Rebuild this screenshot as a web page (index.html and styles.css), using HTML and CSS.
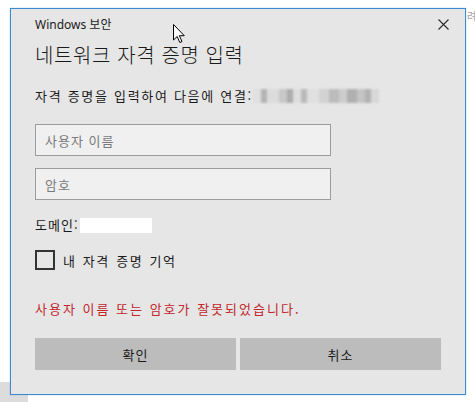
FILE: index.html
```html
<!DOCTYPE html>
<html lang="ko">
<head>
<meta charset="utf-8">
<link rel="stylesheet" href="styles.css">
</head>
<body>
<div class="page">
  <div class="under-tab"></div>
  <div class="peek">려워</div>
  <div class="dialog">
    <div class="caption-row">
      <span class="caption">Windows 보안</span>
      <svg class="close" width="11" height="11" viewBox="0 0 11 11"><path d="M0.5 0.5 L10.5 10.5 M10.5 0.5 L0.5 10.5" stroke="#2b2b2b" stroke-width="1.1" fill="none"/></svg>
    </div>
    <div class="title">네트워크 자격 증명 입력</div>
    <div class="subtitle">자격 증명을 입력하여 다음에 연결: <span class="blurred"></span></div>
    <div class="field field-first"><span class="placeholder">사용자 이름</span></div>
    <div class="field"><span class="placeholder">암호</span></div>
    <div class="domain">도메인:<span class="domain-box"></span></div>
    <label class="remember"><span class="checkbox"></span><span class="remember-text">내 자격 증명 기억</span></label>
    <div class="error">사용자 이름 또는 암호가 잘못되었습니다.</div>
    <div class="buttons">
      <div class="btn">확인</div>
      <div class="btn">취소</div>
    </div>
  </div>
  <svg class="cursor" width="13" height="20" viewBox="0 0 13 20"><path d="M0.5 0.5 L0.5 16 L4.2 12.5 L6.8 18.5 L9 17.6 L6.4 11.7 L11.3 11.7 Z" fill="#ffffff" stroke="#000000" stroke-width="1" stroke-linejoin="miter"/></svg>
</div>
</body>
</html>
```
FILE: styles.css
```css
html, body {
  margin: 0;
  padding: 0;
  background: #ffffff;
}
.page {
  position: relative;
  width: 475px;
  height: 402px;
  overflow: hidden;
  font-family: "Noto Sans", "Noto Sans CJK KR", sans-serif;
  color: #1a1a1a;
}
.under-tab {
  position: absolute;
  left: 0;
  top: 382px;
  width: 28px;
  height: 20px;
  background: #dcdcdc;
}
.peek {
  position: absolute;
  left: 467px;
  top: 10px;
  font-size: 10px;
  line-height: 12px;
  white-space: nowrap;
  color: #a0a0a0;
  font-family: "Noto Sans CJK KR", sans-serif;
}
.cursor {
  position: absolute;
  left: 173px;
  top: 24px;
}
.dialog {
  position: relative;
  margin: 8px 0 0 10px;
  width: 456px;
  height: 387px;
  box-sizing: border-box;
  border: 1px solid #3d8ad0;
  background: #e6e6e6;
  padding: 0 24px;
  box-shadow: 0 0 1px rgba(60, 138, 208, 0.6);
}
.caption-row {
  display: flex;
  justify-content: space-between;
  align-items: center;
  margin-top: 8px;
  height: 16px;
}
.caption {
  font-size: 12px;
  line-height: 16px;
  color: #1a1a1a;
}
.caption-row .close {
  margin-right: -8px;
  margin-top: -1px;
}
.title {
  margin-top: 8px;
  font-family: "Noto Sans CJK KR", sans-serif;
  font-size: 20px;
  font-weight: 300;
  line-height: 28px;
  color: #1a1a1a;
  letter-spacing: 0.6px;
}
.subtitle {
  margin-top: 17px;
  font-family: "Noto Sans CJK KR", sans-serif;
  font-size: 13px;
  line-height: 20px;
  letter-spacing: 1.7px;
  display: flex;
  align-items: center;
}
.blurred {
  display: inline-block;
  width: 126px;
  height: 14px;
  margin-left: 0;
  background:
    linear-gradient(90deg,
      #e0e0e0 0 8px, #b4b4b4 8px 14px, #dcdcdc 14px 26px, #c8c8c8 26px 34px,
      #acacac 34px 40px, #dddddd 40px 48px, #bababa 48px 54px, #e0e0e0 54px 66px,
      #d2d2d2 66px 76px, #bcbcbc 76px 86px, #cccccc 86px 94px, #b0b0b0 94px 104px,
      #c4c4c4 104px 112px, #b2b2b2 112px 118px, #d8d8d8 118px 126px);
  filter: blur(0.8px);
}
.field {
  margin-top: 12px;
  width: 296px;
  height: 32px;
  box-sizing: border-box;
  border: 1px solid #9c9c9c;
  background: #f0f0f0;
  display: flex;
  align-items: center;
  padding-left: 9px;
}
.field-first {
  margin-top: 18px;
}
.placeholder {
  font-family: "Noto Sans CJK KR", sans-serif;
  font-size: 13px;
  letter-spacing: 1px;
  color: #7a7a7a;
}
.domain {
  margin-top: 15px;
  font-family: "Noto Sans CJK KR", sans-serif;
  font-size: 13px;
  line-height: 20px;
  letter-spacing: 1px;
  display: flex;
  align-items: center;
}
.domain-box {
  display: inline-block;
  width: 72px;
  height: 15px;
  background: #ffffff;
  margin-left: 1px;
}
.remember {
  margin-top: 15px;
  display: flex;
  align-items: center;
  height: 20px;
}
.checkbox {
  width: 20px;
  height: 20px;
  box-sizing: border-box;
  border: 2px solid #333333;
  background: #e6e6e6;
}
.remember-text {
  margin-left: 8px;
  font-family: "Noto Sans CJK KR", sans-serif;
  font-size: 13px;
  letter-spacing: 1.6px;
  word-spacing: 1px;
}
.error {
  margin-top: 29px;
  font-family: "Noto Sans CJK KR", sans-serif;
  font-size: 13px;
  line-height: 20px;
  letter-spacing: 2px;
  color: #c1272d;
}
.buttons {
  margin-top: 19px;
  display: flex;
  gap: 4px;
}
.btn {
  flex: 1;
  height: 32px;
  background: #bcbcbc;
  display: flex;
  align-items: center;
  justify-content: center;
  font-family: "Noto Sans CJK KR", sans-serif;
  font-size: 13px;
  letter-spacing: 1px;
  color: #1a1a1a;
}
```
